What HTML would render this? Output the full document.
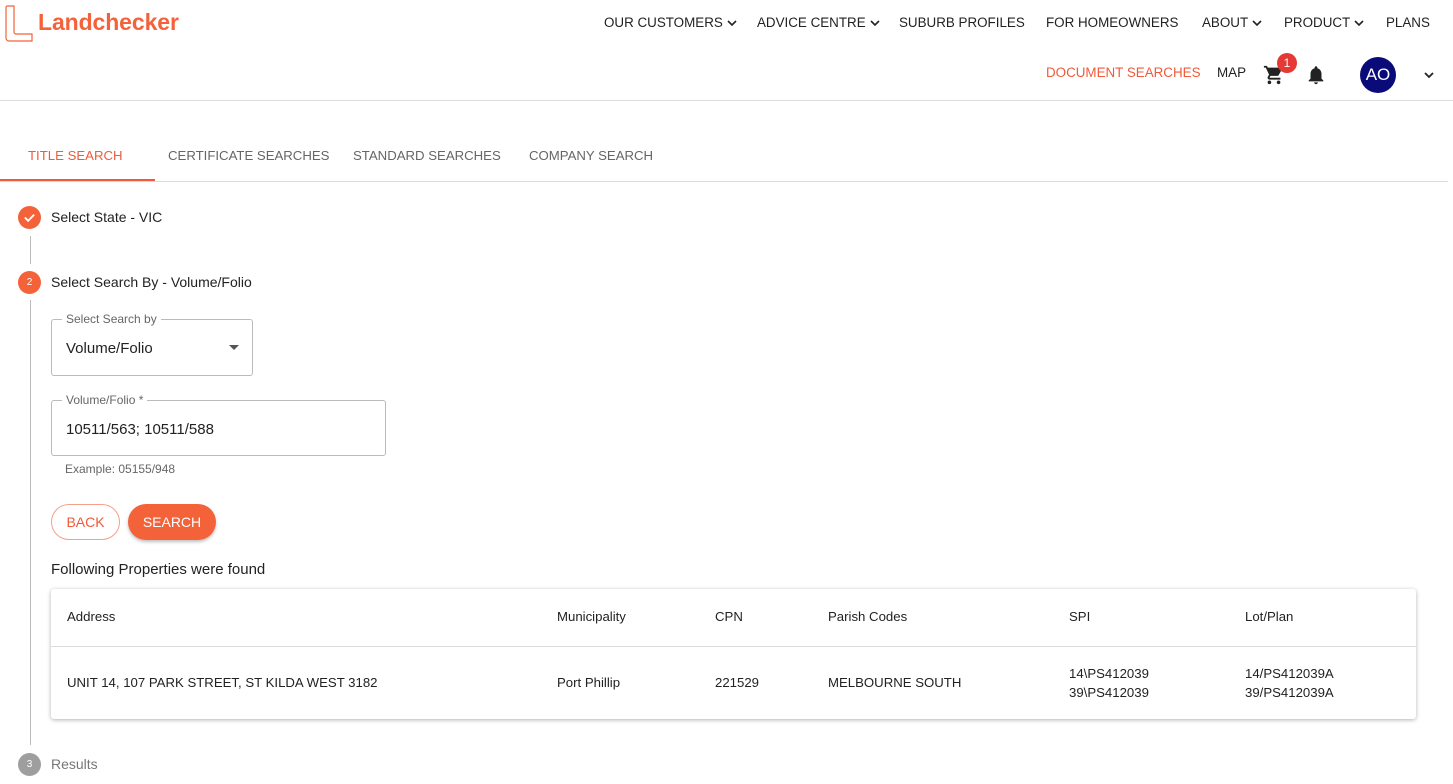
<!DOCTYPE html>
<html><head><style>
*{box-sizing:border-box;margin:0;padding:0}
body{width:1453px;height:784px;overflow:hidden;background:#fff;font-family:"Liberation Sans",sans-serif;color:#222;position:relative}
.a{position:absolute;white-space:nowrap}
.nav{font-size:13.4px;color:#222}
.or{color:#f05a3a}
.circ{position:absolute;width:23px;height:23px;border-radius:50%;background:#f4623a;color:#fff;font-size:10px;text-align:center;line-height:23px}
.vl{position:absolute;left:30px;width:1px;background:#bbb}
.box{position:absolute;border:1px solid #bbb;border-radius:3px}
.lab{position:absolute;top:-8px;left:10px;background:#fff;padding:0 4px;font-size:12px;color:#666}
.th,.td{position:absolute;font-size:13.2px;color:#222}
.chev{display:inline-block;vertical-align:middle;margin-left:4px}
</style></head><body>
<svg class="a" style="left:5px;top:5px" width="30" height="38" viewBox="0 0 30 38"><path d="M2 1h7v26a2 2 0 0 0 2 2h16v7H4a3 3 0 0 1-3-3V2z" fill="none" stroke="#f4623a" stroke-width="1.2"/></svg>
<div class="a or" style="left:38px;top:9px;font-size:23px;font-weight:bold;color:#f4623a;letter-spacing:-0.1px">Landchecker</div>
<div class="a nav" style="left:604px;top:15px">OUR CUSTOMERS<svg class="chev" width="10" height="8" viewBox="0 0 10 8"><path d="M1 2l4 4 4-4" fill="none" stroke="#222" stroke-width="1.6"/></svg></div>
<div class="a nav" style="left:757px;top:15px">ADVICE CENTRE<svg class="chev" width="10" height="8" viewBox="0 0 10 8"><path d="M1 2l4 4 4-4" fill="none" stroke="#222" stroke-width="1.6"/></svg></div>
<div class="a nav" style="left:899px;top:15px">SUBURB PROFILES</div>
<div class="a nav" style="left:1046px;top:15px">FOR HOMEOWNERS</div>
<div class="a nav" style="left:1202px;top:15px">ABOUT<svg class="chev" width="10" height="8" viewBox="0 0 10 8"><path d="M1 2l4 4 4-4" fill="none" stroke="#222" stroke-width="1.6"/></svg></div>
<div class="a nav" style="left:1284px;top:15px">PRODUCT<svg class="chev" width="10" height="8" viewBox="0 0 10 8"><path d="M1 2l4 4 4-4" fill="none" stroke="#222" stroke-width="1.6"/></svg></div>
<div class="a nav" style="left:1386px;top:15px">PLANS</div>
<div class="a nav or" style="left:1046px;top:65px">DOCUMENT SEARCHES</div>
<div class="a nav" style="left:1217px;top:65px">MAP</div>
<svg class="a" style="left:1263px;top:64px" width="22" height="22" viewBox="0 0 24 24"><path fill="#222" d="M7 18c-1.1 0-2 .9-2 2s.9 2 2 2 2-.9 2-2-.9-2-2-2zM1 2v2h2l3.6 7.6-1.35 2.4C5.1 14.3 5 14.6 5 15c0 1.1.9 2 2 2h12v-2H7.4c-.1 0-.2-.1-.2-.2l.9-1.8h7.4c.8 0 1.4-.4 1.7-1l3.6-6.5c.1-.2.1-.3.1-.5 0-.6-.4-1-1-1H5.2l-.9-2H1zm16 16c-1.1 0-2 .9-2 2s.9 2 2 2 2-.9 2-2-.9-2-2-2z"/></svg>
<div class="a" style="left:1277px;top:53px;width:20px;height:20px;border-radius:50%;background:#e53935;color:#fff;font-size:12px;text-align:center;line-height:20px">1</div>
<svg class="a" style="left:1305px;top:64px" width="22" height="22" viewBox="0 0 24 24"><path fill="#222" d="M12 22c1.1 0 2-.9 2-2h-4c0 1.1.9 2 2 2zm6-6v-5c0-3.1-1.6-5.6-4.5-6.3V4c0-.8-.7-1.5-1.5-1.5s-1.5.7-1.5 1.5v.7C7.6 5.4 6 7.9 6 11v5l-2 2v1h16v-1l-2-2z"/></svg>
<div class="a" style="left:1360px;top:57px;width:36px;height:36px;border-radius:50%;background:#0a0a78;color:#fff;font-size:17px;text-align:center;line-height:36px">AO</div>
<svg class="a" style="left:1423px;top:70px" width="12" height="10" viewBox="0 0 12 10"><path d="M2 3l4 4 4-4" fill="none" stroke="#222" stroke-width="1.8"/></svg>
<div class="a" style="left:0;top:100px;width:1453px;height:1px;background:#ddd"></div>
<div class="a or" style="left:28px;top:148px;font-size:13.2px">TITLE SEARCH</div>
<div class="a" style="left:168px;top:148px;font-size:13.2px;color:#666">CERTIFICATE SEARCHES</div>
<div class="a" style="left:353px;top:148px;font-size:13.2px;color:#666">STANDARD SEARCHES</div>
<div class="a" style="left:529px;top:148px;font-size:13.2px;color:#666">COMPANY SEARCH</div>
<div class="a" style="left:0;top:181px;width:1448px;height:1px;background:#ddd"></div>
<div class="a" style="left:0;top:179px;width:155px;height:2px;background:#f05a3a"></div>
<div class="circ" style="left:18px;top:206px"><svg width="13" height="13" viewBox="0 0 14 14" style="margin-top:5px"><path d="M2 7l3.5 3.5L12 4" fill="none" stroke="#fff" stroke-width="2"/></svg></div>
<div class="a" style="left:51px;top:209px;font-size:14px">Select State - VIC</div>
<div class="vl" style="top:236px;height:28px"></div>
<div class="circ" style="left:18px;top:271px">2</div>
<div class="a" style="left:51px;top:274px;font-size:14px">Select Search By - Volume/Folio</div>
<div class="vl" style="top:300px;height:445px"></div>
<div class="box" style="left:51px;top:319px;width:202px;height:57px"><div class="lab">Select Search by</div><div class="a" style="left:14px;top:20px;font-size:15px">Volume/Folio</div><div class="a" style="left:177px;top:25px;border:5px solid transparent;border-top-color:#555"></div></div>
<div class="box" style="left:51px;top:400px;width:335px;height:56px"><div class="lab">Volume/Folio *</div><div class="a" style="left:14px;top:20px;font-size:15px">10511/563; 10511/588</div></div>
<div class="a" style="left:65px;top:462px;font-size:12px;color:#666">Example: 05155/948</div>
<div class="a or" style="left:51px;top:504px;width:69px;height:36px;border:1px solid #f4a08a;border-radius:18px;font-size:14px;text-align:center;line-height:34px">BACK</div>
<div class="a" style="left:128px;top:504px;width:88px;height:36px;background:#f4623a;border-radius:18px;font-size:14px;color:#fff;text-align:center;line-height:36px;box-shadow:0 2px 3px rgba(0,0,0,.25)">SEARCH</div>
<div class="a" style="left:51px;top:561px;font-size:15px">Following Properties were found</div>
<div class="a" style="left:51px;top:589px;width:1365px;height:130px;box-shadow:0 1px 4px rgba(0,0,0,.3);border-radius:3px;background:#fff">
<div class="a" style="left:0;top:57px;width:1365px;height:1px;background:#ddd"></div>
<div class="th" style="left:16px;top:20px">Address</div>
<div class="th" style="left:506px;top:20px">Municipality</div>
<div class="th" style="left:664px;top:20px">CPN</div>
<div class="th" style="left:777px;top:20px">Parish Codes</div>
<div class="th" style="left:1018px;top:20px">SPI</div>
<div class="th" style="left:1194px;top:20px">Lot/Plan</div>
<div class="td" style="left:16px;top:86px">UNIT 14, 107 PARK STREET, ST KILDA WEST 3182</div>
<div class="td" style="left:506px;top:86px">Port Phillip</div>
<div class="td" style="left:664px;top:86px">221529</div>
<div class="td" style="left:777px;top:86px">MELBOURNE SOUTH</div>
<div class="td" style="left:1018px;top:75px;line-height:19px">14\PS412039<br>39\PS412039</div>
<div class="td" style="left:1194px;top:75px;line-height:19px">14/PS412039A<br>39/PS412039A</div>
</div>
<div class="circ" style="left:18px;top:753px;background:#9e9e9e">3</div>
<div class="a" style="left:51px;top:756px;font-size:14px;color:#777">Results</div>
</body></html>
